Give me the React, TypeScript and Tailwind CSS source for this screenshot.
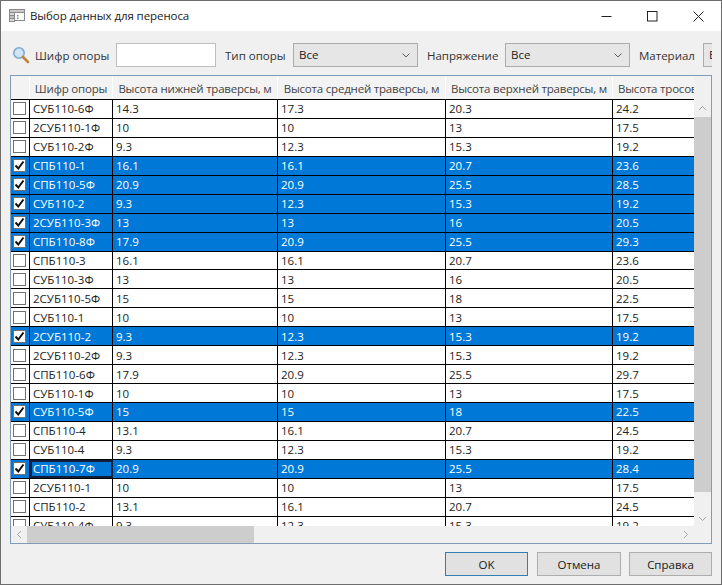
import React from "react";

const rows: [string, string, string, string, string, boolean][] = [
  ["СУБ110-6Ф", "14.3", "17.3", "20.3", "24.2", false],
  ["2СУБ110-1Ф", "10", "10", "13", "17.5", false],
  ["СУБ110-2Ф", "9.3", "12.3", "15.3", "19.2", false],
  ["СПБ110-1", "16.1", "16.1", "20.7", "23.6", true],
  ["СПБ110-5Ф", "20.9", "20.9", "25.5", "28.5", true],
  ["СУБ110-2", "9.3", "12.3", "15.3", "19.2", true],
  ["2СУБ110-3Ф", "13", "13", "16", "20.5", true],
  ["СПБ110-8Ф", "17.9", "20.9", "25.5", "29.3", true],
  ["СПБ110-3", "16.1", "16.1", "20.7", "23.6", false],
  ["СУБ110-3Ф", "13", "13", "16", "20.5", false],
  ["2СУБ110-5Ф", "15", "15", "18", "22.5", false],
  ["СУБ110-1", "10", "10", "13", "17.5", false],
  ["2СУБ110-2", "9.3", "12.3", "15.3", "19.2", true],
  ["2СУБ110-2Ф", "9.3", "12.3", "15.3", "19.2", false],
  ["СПБ110-6Ф", "17.9", "20.9", "25.5", "29.7", false],
  ["СУБ110-1Ф", "10", "10", "13", "17.5", false],
  ["СУБ110-5Ф", "15", "15", "18", "22.5", true],
  ["СПБ110-4", "13.1", "16.1", "20.7", "24.5", false],
  ["СУБ110-4", "9.3", "12.3", "15.3", "19.2", false],
  ["СПБ110-7Ф", "20.9", "20.9", "25.5", "28.4", true],
  ["2СУБ110-1", "10", "10", "13", "17.5", false],
  ["СПБ110-2", "13.1", "16.1", "20.7", "24.5", false],
  ["СУБ110-4Ф", "9.3", "12.3", "15.3", "19.2", false],
];

function Chevron({ d }: { d: string }) {
  return (
    <svg width="9" height="9" viewBox="0 0 9 9" fill="none" stroke="#a6a6a6" strokeWidth="1">
      <path d={d} />
    </svg>
  );
}

function Combo({ w }: { w: string }) {
  return (
    <div className={`${w} h-[24px] shrink-0 flex items-center justify-between pl-[5px] pr-[4px] bg-[#e6e6e6] border border-[#acacac]`}>
      <span>Все</span>
      <svg width="8" height="5" viewBox="0 0 8 5" fill="none" stroke="#606060" strokeWidth="1" className="mr-[3px]">
        <path d="M0.5 0.5l3.5 3.5 3.5-3.5" />
      </svg>
    </div>
  );
}

function Check({ on }: { on: boolean }) {
  return (
    <div className="w-[13px] h-[13px] border border-[#707070] bg-white flex items-center justify-center">
      {on && (
        <svg width="11" height="11" viewBox="0 0 11 11" fill="none" stroke="#111" strokeWidth="2">
          <path d="M1.5 5.5l2.8 3L9.5 1.5" />
        </svg>
      )}
    </div>
  );
}

const col = ["w-[19px]", "w-[83px]", "w-[165px]", "w-[168px]", "w-[167px]", "w-[83px]"];

export default function App() {
  return (
    <div
      className="w-[722px] h-[585px] overflow-hidden flex flex-col bg-[#f0f0f0] border border-[#6d6d6d] text-[11.5px] leading-[16px] text-[#1a1a1a]"
      style={{ fontFamily: '"Open Sans", "Noto Sans", sans-serif' }}
    >
      <div className="h-[30px] shrink-0 bg-white flex items-center pl-[8px]">
        <svg width="17" height="15" viewBox="0 0 17 15" fill="none" className="mr-[4px]">
          <rect x="0.5" y="0.5" width="15" height="3" fill="#c8c8c8" stroke="#8a8a8a" />
          <rect x="0.5" y="3.5" width="5" height="3" fill="#d8d8d8" stroke="#8a8a8a" />
          <rect x="0.5" y="6.5" width="5" height="3" fill="#c0c0c0" stroke="#8a8a8a" />
          <rect x="0.5" y="9.5" width="5" height="3" fill="#d8d8d8" stroke="#8a8a8a" />
          <rect x="5.5" y="3.5" width="10" height="8" fill="#fff" stroke="#8a8a8a" />
          <rect x="8" y="6" width="1.5" height="1.5" fill="#6a9a70" />
          <rect x="8" y="8.5" width="1.5" height="1.5" fill="#6a9a70" />
        </svg>
        <span className="tracking-[-0.08px]">Выбор данных для переноса</span>
        <div className="ml-auto flex items-center pr-[17px]">
          <svg width="11" height="11" viewBox="0 0 11 11" className="mr-[35px]" stroke="#222" fill="none">
            <path d="M0.5 5.5h10" />
          </svg>
          <svg width="11" height="11" viewBox="0 0 11 11" className="mr-[35px]" stroke="#222" fill="none">
            <rect x="0.5" y="0.5" width="9.5" height="9.5" />
          </svg>
          <svg width="11" height="11" viewBox="0 0 11 11" stroke="#222" fill="none">
            <path d="M0.5 0.5l10 10M10.5 0.5l-10 10" />
          </svg>
        </div>
      </div>

      <div className="flex-1 min-h-0 flex flex-col pl-[9px] pr-[9px]">
        <div className="h-[24px] mt-[12px] shrink-0 flex items-center overflow-hidden">
          <svg width="18" height="18" viewBox="0 0 18 18" fill="none" className="ml-[2px] mr-[5px] shrink-0">
            <circle cx="7" cy="7" r="5.2" fill="#cfe6f7" stroke="#7fa9c9" strokeWidth="1.6" />
            <path d="M11 11l5 5" stroke="#b9853f" strokeWidth="2.6" strokeLinecap="round" />
          </svg>
          <span className="shrink-0 w-[81px] text-[#333] mt-[2px]">Шифр опоры</span>
          <div className="w-[100px] h-[24px] shrink-0 bg-white border border-[#bdbdbd]" />
          <span className="shrink-0 ml-[9px] w-[68px] text-[#333] mt-[2px]">Тип опоры</span>
          <Combo w="w-[125px]" />
          <span className="shrink-0 ml-[9px] w-[78px] text-[#333] mt-[2px]">Напряжение</span>
          <Combo w="w-[125px]" />
          <span className="shrink-0 ml-[9px] w-[64px] text-[#333] mt-[2px]">Материал</span>
          <Combo w="w-[60px]" />
        </div>

        <div className="mt-[8px] h-[469px] shrink-0 border border-[#7f9db9] bg-white flex flex-col overflow-hidden">
          <div className="flex-1 min-h-0 flex">
            <div className="flex-1 min-w-0 flex flex-col overflow-hidden">
              <div className="flex h-[23px] shrink-0 bg-[#f3f3f3]">
                {["", "Шифр опоры", "Высота нижней траверсы, м", "Высота средней траверсы, м", "Высота верхней траверсы, м", "Высота тросов"].map(
                  (h, i) => (
                    <div
                      key={i}
                      className={`${col[i]} shrink-0 h-full overflow-hidden whitespace-nowrap pt-[3px] flex items-center text-[#444] tracking-[-0.2px] ${i < 5 ? "border-r border-white justify-center" : "pl-[5px]"}`}
                    >
                      {h}
                    </div>
                  ),
                )}
              </div>
              <div className="flex-1 min-h-0 overflow-hidden border-t border-black">
                {rows.map((r, i) => (
                  <div
                    key={i}
                    className={`flex h-[18.95px] border-b border-black ${r[5] ? "bg-[#0078d7] text-white" : "bg-white text-[#222]"}`}
                  >
                    <div className={`${col[0]} shrink-0 border-r border-black pr-[1px] flex items-center justify-center`}>
                      <Check on={r[5]} />
                    </div>
                    {[r[0], r[1], r[2], r[3], r[4]].map((c, j) => (
                      <div
                        key={j}
                        className={`${col[j + 1]} shrink-0 pl-[3px] pt-[1px] flex items-center ${j < 4 ? "border-r border-black" : ""} ${i === 19 && j === 0 ? "outline-2 -outline-offset-2 outline-[#10203a]" : ""}`}
                      >
                        {c}
                      </div>
                    ))}
                  </div>
                ))}
              </div>
            </div>
            <div className="w-[17px] shrink-0 bg-[#f0f0f0] flex flex-col">
              <div className="h-[17px] mt-[24px] flex items-center justify-center">
                <Chevron d="M1 6l3.5-3.5L8 6" />
              </div>
              <div className="h-[375px] bg-[#cdcdcd]" />
              <div className="flex-1 flex items-end justify-center pb-[3px]">
                <Chevron d="M1 3l3.5 3.5L8 3" />
              </div>
            </div>
          </div>
          <div className="h-[17px] shrink-0 bg-[#f0f0f0] flex items-center">
            <div className="w-[16px] flex items-center justify-center">
              <Chevron d="M6 1L2.5 4.5 6 8" />
            </div>
            <div className="w-[227px] h-full bg-[#cdcdcd]" />
            <div className="flex-1 flex justify-end pr-[21px]">
              <Chevron d="M3 1l3.5 3.5L3 8" />
            </div>
          </div>
        </div>

        <div className="mt-[8px] flex justify-end">
          <div className="w-[83px] h-[24px] mr-[9px] pt-[1px] border border-[#2f7fb5] bg-[#e1e1e1] flex items-center justify-center">OK</div>
          <div className="w-[84px] h-[24px] mr-[8px] pt-[1px] border border-[#adadad] bg-[#e1e1e1] flex items-center justify-center">Отмена</div>
          <div className="w-[83px] h-[24px] pt-[1px] border border-[#adadad] bg-[#e1e1e1] flex items-center justify-center">Справка</div>
        </div>
      </div>
    </div>
  );
}
